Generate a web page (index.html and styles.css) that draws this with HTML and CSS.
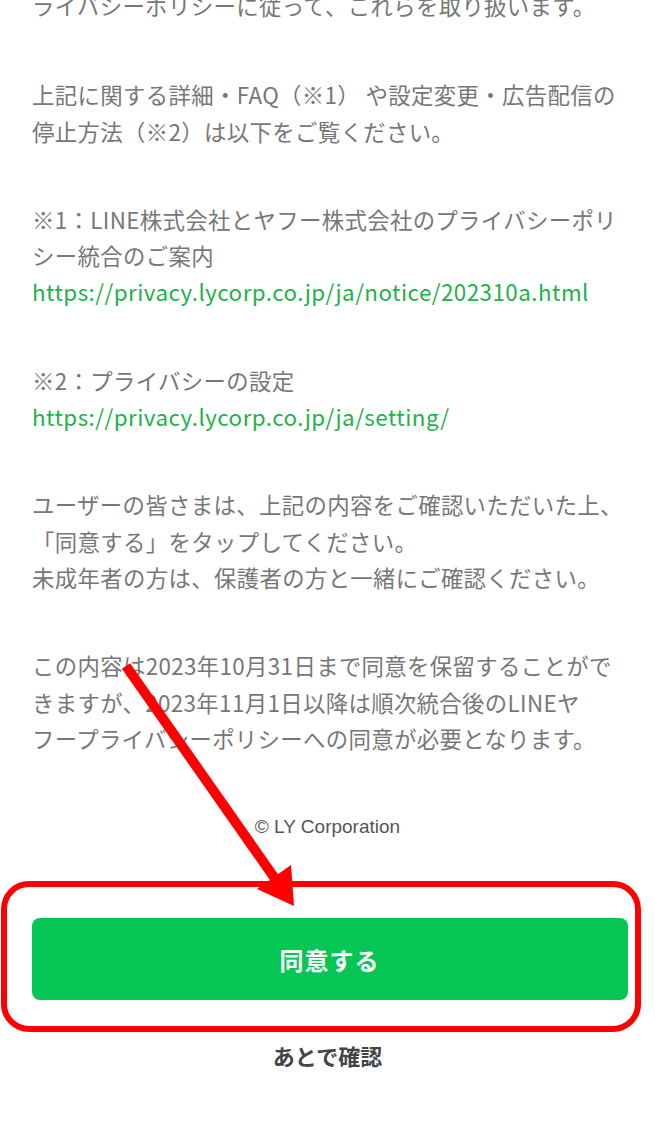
FILE: index.html
```html
<!DOCTYPE html>
<html lang="ja">
<head>
<meta charset="utf-8">
<title>同意</title>
<link rel="stylesheet" href="styles.css">
</head>
<body>
<div class="page">
  <main class="content">
    <p class="para first">ライバシーポリシーに従って、これらを取り扱います。</p>
    <p class="para">上記に関する詳細・FAQ（※1） や設定変更・広告配信の<br>停止方法（※2）は以下をご覧ください。</p>
    <p class="para">※1：LINE株式会社とヤフー株式会社のプライバシーポリ<br>シー統合のご案内<br><a class="link" href="#">https://privacy.lycorp.co.jp/ja/notice/202310a.html</a></p>
    <p class="para">※2：プライバシーの設定<br><a class="link" href="#">https://privacy.lycorp.co.jp/ja/setting/</a></p>
    <p class="para">ユーザーの皆さまは、上記の内容をご確認いただいた上、<br>「同意する」をタップしてください。<br>未成年者の方は、保護者の方と一緒にご確認ください。</p>
    <p class="para">この内容は2023年10月31日まで同意を保留することがで<br>きますが、2023年11月1日以降は順次統合後のLINEヤ<br>フープライバシーポリシーへの同意が必要となります。</p>
  </main>
  <footer class="footer">
    <div class="copyright">© LY Corporation</div>
    <button class="agree" type="button">同意する</button>
    <div class="later">あとで確認</div>
  </footer>
  <svg class="annotation" width="655" height="1125" viewBox="0 0 655 1125" aria-hidden="true">
    <rect x="4" y="884" width="634" height="145" rx="25" ry="25" fill="none" stroke="#ff0000" stroke-width="6"/>
    <line x1="126" y1="666" x2="276" y2="880" stroke="#ff0000" stroke-width="10"/>
    <polygon points="294,906 257,889 291,865" fill="#ff0000"/>
  </svg>
</div>
</body>
</html>
```
FILE: styles.css
```css
html, body {
  margin: 0;
  padding: 0;
  background: #ffffff;
}

body {
  font-family: "Noto Sans CJK JP", "Noto Sans", sans-serif;
  color: #777777;
  overflow: hidden;
}

.page {
  position: relative;
  width: 655px;
  height: 1125px;
  overflow: hidden;
}

.content {
  padding: 0 0 0 32px;
  margin-top: -13px;
}

.para {
  margin: 0 0 52px 0;
  font-size: 22.4px;
  line-height: 36.3px;
  white-space: nowrap;
  letter-spacing: 0.35px;
}

.para.first {
  margin-bottom: 53px;
}

.para:last-child {
  margin-bottom: 0;
}

.link {
  color: #1fb14b;
  text-decoration: none;
  letter-spacing: 0.45px;
}

.footer {
  display: flex;
  flex-direction: column;
  align-items: center;
}

.copyright {
  margin-top: 59px;
  font-family: "Liberation Sans", "Noto Sans", sans-serif;
  font-size: 19px;
  line-height: 24px;
  color: #555555;
}

.agree {
  margin-top: 79px;
  width: 596px;
  height: 82px;
  margin-left: 4px;
  border: none;
  border-radius: 8px;
  background: #06c755;
  color: #ffffff;
  font-family: "Noto Sans CJK JP", sans-serif;
  font-size: 24px;
  font-weight: 700;
  letter-spacing: 1px;
}

.later {
  margin-top: 40px;
  font-size: 22px;
  line-height: 30px;
  font-weight: 700;
  color: #444444;
}

.annotation {
  position: absolute;
  left: 0;
  top: 0;
  pointer-events: none;
}
```
